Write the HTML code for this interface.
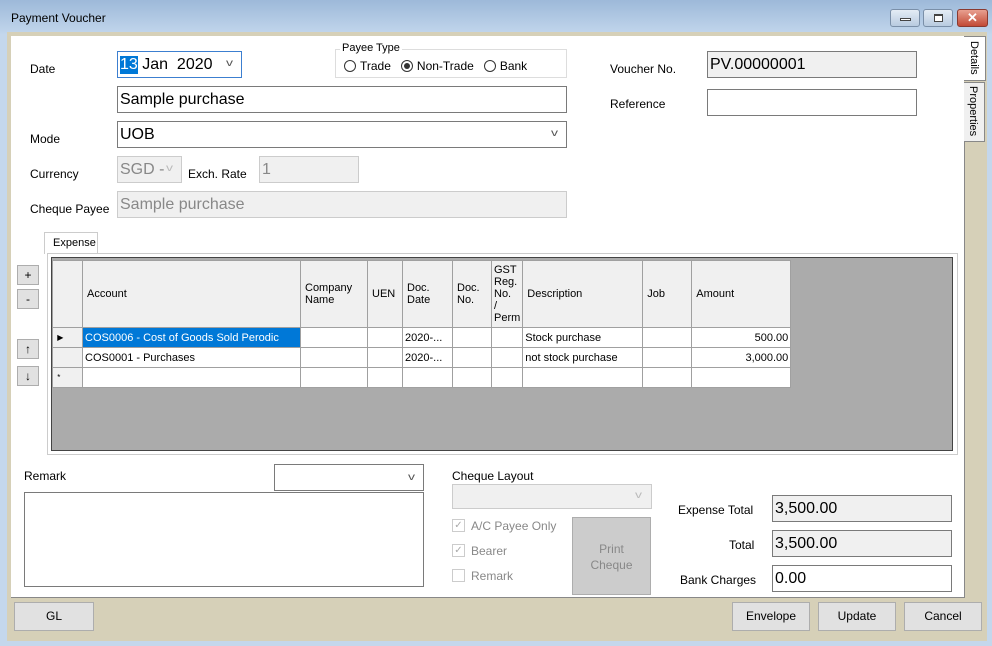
<!DOCTYPE html><html><head><style>
*{box-sizing:border-box}body{margin:0;width:992px;height:646px;overflow:hidden;font-family:"Liberation Sans",sans-serif;font-size:12px;color:#000;background:#c4d7ec}
.a{position:absolute}
.inp{position:absolute;border:1px solid #7a7a7a;background:#fff;font-size:16px;padding:0 2px;display:flex;align-items:center;white-space:nowrap}
.dis{background:#f0f0f0;border-color:#ccc;color:#888}
.lbl{position:absolute;font-size:12px}
.btn{position:absolute;background:#e1e1e1;border:1px solid #adadad;text-align:center;font-size:12px}
.chev{position:absolute;font-size:10px;color:#555;transform:scaleX(1.4)}
table{border-collapse:collapse;position:absolute;left:52px;top:260px;font-size:11px}
td{border:1px solid #a0a0a0;padding:0 2px;height:20px;background:#fff;white-space:nowrap;overflow:hidden}
th{border:1px solid #a0a0a0;background:#f0f0f0;font-weight:normal;text-align:left;padding:0 4px;height:67px;font-size:11px;line-height:12px}
.rad{display:inline-block;width:12px;height:12px;border:1px solid #333;border-radius:50%;vertical-align:-2px;margin-right:4px;position:relative}
.cb{position:absolute;width:13px;height:13px;border:1px solid #ccc;background:#fff;font-size:10px;color:#aaa;line-height:11px;text-align:center}
</style></head><body>
<div class="a" style="left:0;top:0;width:992px;height:34px;background:linear-gradient(#9db9d9,#c2d6ec)"></div>
<div class="a" style="left:11px;top:11px;font-size:12px">Payment Voucher</div>
<div class="a" style="left:890px;top:9px;width:30px;height:18px;border:1px solid #7a8fa8;border-radius:3px;background:linear-gradient(#e4ecf5,#b8cbe0)"><div class="a" style="left:9px;top:8px;width:11px;height:3px;border:1px solid #444;background:#fff"></div></div>
<div class="a" style="left:923px;top:9px;width:30px;height:18px;border:1px solid #7a8fa8;border-radius:3px;background:linear-gradient(#e4ecf5,#b8cbe0)"><div class="a" style="left:10px;top:4px;width:9px;height:8px;border:1px solid #444;border-top-width:2px;background:#fff"></div></div>
<div class="a" style="left:957px;top:9px;width:31px;height:18px;border:1px solid #8a3a30;border-radius:3px;background:linear-gradient(#e8a090,#c24a36);color:#fff;font-weight:bold;text-align:center;font-size:13px;line-height:16px">✕</div>
<div class="a" style="left:7px;top:32px;width:980px;height:609px;background:#d6d0b8"></div>
<div class="a" style="left:11px;top:36px;width:953px;height:562px;background:#fff;border-bottom:1px solid #888"></div>
<div class="a" style="left:964px;top:36px;width:22px;height:45px;background:#fff;border:1px solid #888;border-left:none"><div class="a" style="left:4px;top:4px;writing-mode:vertical-rl;font-size:11px">Details</div></div>
<div class="a" style="left:964px;top:82px;width:21px;height:60px;background:#f0f0f0;border:1px solid #888;border-left:none"><div class="a" style="left:3px;top:3px;writing-mode:vertical-rl;font-size:11px">Properties</div></div>
<div class="a" style="left:964px;top:142px;width:1px;height:456px;background:#888"></div>

<div class="lbl" style="left:30px;top:62px">Date</div>
<div class="inp" style="left:117px;top:51px;width:125px;height:27px;border-color:#3c7fd0"><span style="background:#0078d7;color:#fff">13</span>&nbsp;Jan&nbsp; 2020</div>
<div class="chev" style="left:227px;top:58px">v</div>
<div class="a" style="left:335px;top:49px;width:232px;height:29px;border:1px solid #ddd"></div>
<div class="a" style="left:340px;top:42px;background:#fff;padding:0 2px;font-size:11px">Payee Type</div>
<div class="a" style="left:344px;top:59px;font-size:12px"><span class="rad"></span>Trade&nbsp;&nbsp; <span class="rad"><span class="a" style="left:2px;top:2px;width:6px;height:6px;border-radius:50%;background:#333"></span></span>Non-Trade&nbsp;&nbsp; <span class="rad"></span>Bank</div>
<div class="inp" style="left:117px;top:86px;width:450px;height:27px">Sample purchase</div>
<div class="lbl" style="left:30px;top:132px">Mode</div>
<div class="inp" style="left:117px;top:121px;width:450px;height:27px">UOB</div>
<div class="chev" style="left:552px;top:128px">v</div>
<div class="lbl" style="left:30px;top:167px">Currency</div>
<div class="inp dis" style="left:117px;top:156px;width:65px;height:27px">SGD -</div>
<div class="chev" style="left:167px;top:163px;color:#bbb">v</div>
<div class="lbl" style="left:188px;top:167px">Exch. Rate</div>
<div class="inp dis" style="left:259px;top:156px;width:100px;height:27px">1</div>
<div class="lbl" style="left:30px;top:202px">Cheque Payee</div>
<div class="inp dis" style="left:117px;top:191px;width:450px;height:27px">Sample purchase</div>
<div class="lbl" style="left:610px;top:62px">Voucher No.</div>
<div class="inp" style="left:707px;top:51px;width:210px;height:27px;background:#f0f0f0">PV.00000001</div>
<div class="lbl" style="left:610px;top:97px">Reference</div>
<div class="inp" style="left:707px;top:89px;width:210px;height:27px"></div>

<div class="a" style="left:44px;top:232px;width:54px;height:22px;border:1px solid #ccc;border-bottom:none;background:#fff;font-size:11px;padding:4px 0 0 8px">Expense</div>
<div class="a" style="left:47px;top:253px;width:911px;height:202px;border:1px solid #ccc"></div>
<div class="a" style="left:51px;top:257px;width:902px;height:194px;background:#ababab;border:1px solid #444"></div>
<table>
<tr><th style="width:30px"></th><th style="width:218px">Account</th><th style="width:67px">Company<br>Name</th><th style="width:35px">UEN</th><th style="width:50px">Doc.<br>Date</th><th style="width:39px">Doc.<br>No.</th><th style="width:31px;padding:0 2px">GST<br>Reg.<br>No.<br>/<br>Perm</th><th style="width:120px">Description</th><th style="width:49px">Job</th><th style="width:99px">Amount</th></tr>
<tr><td style="font-size:8px;background:#f0f0f0">&nbsp;▶</td><td style="background:#0078d7;color:#fff">COS0006 - Cost of Goods Sold Perodic</td><td></td><td></td><td>2020-...</td><td></td><td></td><td>Stock purchase</td><td></td><td style="text-align:right">500.00</td></tr>
<tr><td style="background:#f0f0f0"></td><td>COS0001 - Purchases</td><td></td><td></td><td>2020-...</td><td></td><td></td><td>not stock purchase</td><td></td><td style="text-align:right">3,000.00</td></tr>
<tr><td style="background:#f0f0f0;font-size:8px">&nbsp;*</td><td></td><td></td><td></td><td></td><td></td><td></td><td></td><td></td><td></td></tr>
</table>
<div class="btn" style="left:17px;top:265px;width:22px;height:20px;line-height:18px">+</div>
<div class="btn" style="left:17px;top:289px;width:22px;height:20px;line-height:18px">-</div>
<div class="btn" style="left:17px;top:339px;width:22px;height:20px;line-height:18px">↑</div>
<div class="btn" style="left:17px;top:366px;width:22px;height:20px;line-height:18px">↓</div>

<div class="lbl" style="left:24px;top:469px">Remark</div>
<div class="inp" style="left:274px;top:464px;width:150px;height:27px"></div>
<div class="chev" style="left:409px;top:472px">v</div>
<div class="inp" style="left:24px;top:492px;width:400px;height:95px"></div>
<div class="lbl" style="left:452px;top:469px">Cheque Layout</div>
<div class="inp dis" style="left:452px;top:484px;width:200px;height:25px"></div>
<div class="chev" style="left:636px;top:490px;color:#bbb">v</div>
<div class="cb" style="left:452px;top:519px">✓</div><div class="lbl" style="left:471px;top:519px;color:#888">A/C Payee Only</div>
<div class="cb" style="left:452px;top:544px">✓</div><div class="lbl" style="left:471px;top:544px;color:#888">Bearer</div>
<div class="cb" style="left:452px;top:569px"></div><div class="lbl" style="left:471px;top:569px;color:#888">Remark</div>
<div class="btn" style="left:572px;top:517px;width:79px;height:78px;background:#ccc;color:#888;padding-top:23px;line-height:16px">Print<br>Cheque</div>
<div class="lbl" style="left:678px;top:503px">Expense Total</div>
<div class="inp" style="left:772px;top:495px;width:180px;height:27px;background:#f0f0f0">3,500.00</div>
<div class="lbl" style="left:729px;top:538px">Total</div>
<div class="inp" style="left:772px;top:530px;width:180px;height:27px;background:#f0f0f0">3,500.00</div>
<div class="lbl" style="left:680px;top:573px">Bank Charges</div>
<div class="inp" style="left:772px;top:565px;width:180px;height:27px">0.00</div>

<div class="btn" style="left:14px;top:602px;width:80px;height:29px;line-height:27px">GL</div>
<div class="btn" style="left:732px;top:602px;width:78px;height:29px;line-height:27px">Envelope</div>
<div class="btn" style="left:818px;top:602px;width:78px;height:29px;line-height:27px">Update</div>
<div class="btn" style="left:904px;top:602px;width:78px;height:29px;line-height:27px">Cancel</div>
</body></html>
